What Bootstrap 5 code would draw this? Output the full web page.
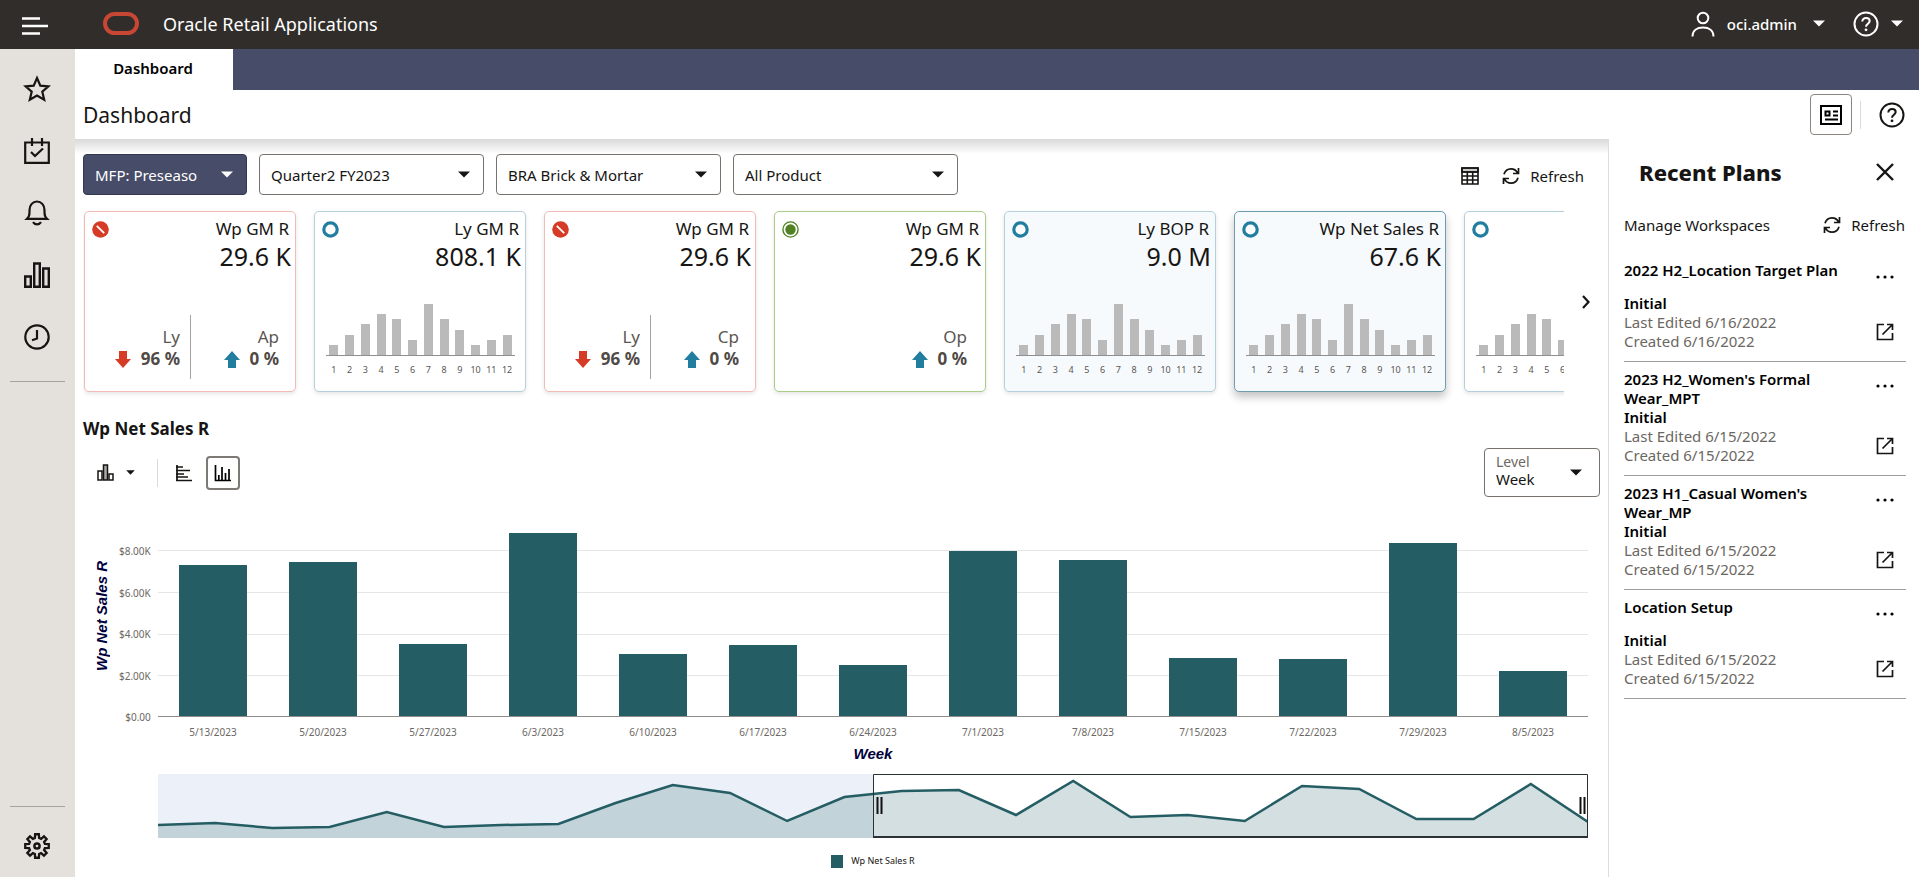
<!DOCTYPE html>
<html lang="en">
<head>
<meta charset="utf-8">
<meta name="viewport" content="width=device-width, initial-scale=1">
<title>Oracle Retail Applications - Dashboard</title>
<link href="https://cdn.jsdelivr.net/npm/bootstrap@5.3.0/dist/css/bootstrap.min.css" rel="stylesheet">
<style>
  :root { --ink:#161513; --navy:#474c68; --teal:#245d63; }
  body { font-family:"Noto Sans","Open Sans",sans-serif; font-size:15px; line-height:20px; color:var(--ink); background:#fff; }
  svg { display:block; flex:none; }
  .ico { fill:none; stroke:currentColor; }
  .plain { border:0; background:none; padding:0; color:inherit; }
  .topbar { height:49px; background:#312d2a; color:#fff; padding-bottom:2px; }
  .topbar h1 { font-size:18px; line-height:24px; }
  .menu-btn { width:75px; padding-left:22px; }
  .user-btn { margin-right:28px; }
  .rail { width:75px; flex:none; background:#e4e1dd; padding-top:9px; }
  .rail .plain { width:74px; height:62px; display:flex; align-items:center; justify-content:center; }
  .rail hr { width:55px; margin:13px 10px 0; border-color:#8d8984; opacity:.7; }
  .rail .rail-end hr { margin:0 10px 8px; }
  .tabstrip { height:41px; background:var(--navy); }
  .tabstrip a { width:158px; background:#fff; color:#000; font-weight:600; text-decoration:none; padding:0 2px 4px 0; }
  .titlerow { height:49px; padding:0 14px 0 8px; }
  .titlerow h2 { font-size:21px; line-height:28px; }
  .panel-btn { width:42px; height:41px; border:1px solid #8b8580; border-radius:4px; background:#fff; }
  .vline { width:1px; height:28px; background:#dcdad8; }
  .help-btn { margin-left:18px; }
  .workarea { background:linear-gradient(#d9d9d9, #fff 15px) no-repeat 0 0/100% 15px; padding:15px 8px 8px; min-width:0; }
  .pick { width:225px; height:41px; padding:7px 48px 5px 11px; font-size:15px; color:var(--ink); border:1px solid #77726d; border-radius:4px;
    background-image:url("data:image/svg+xml,%3Csvg xmlns='http://www.w3.org/2000/svg' viewBox='0 0 12 7'%3E%3Cpath d='M0 .5h12L6 6.5z' fill='%23161513'/%3E%3C/svg%3E");
    background-size:12px 7px; background-position:right 13px center; }
  .pick-dark { width:164px; padding-right:48px; color:#fff; background-color:var(--navy); border-color:#33374f;
    background-image:url("data:image/svg+xml,%3Csvg xmlns='http://www.w3.org/2000/svg' viewBox='0 0 12 7'%3E%3Cpath d='M0 .5h12L6 6.5z' fill='%23fff'/%3E%3C/svg%3E"); }
  .actions { gap:23px; padding-top:2px; }
  .refresh { gap:10px; }
  .strip { overflow:hidden; gap:18px; padding:16px 0 16px 1px; }
  .next-btn { width:36px; flex:none; padding-left:18px; }
  .kpi { flex:none; width:212px; height:181px; border:1px solid; border-radius:5px; padding:5px 6px 0 7px; background:#fff; box-shadow:0 2px 4px rgba(0,0,0,.1); }
  .kpi-red { border-color:#f3bbb5; }
  .kpi-blue { border-color:#b6cfdc; }
  .kpi-green { border-color:#abcb88; }
  .kpi-tint { background:#f6fafd; }
  .kpi-on { border-color:#6f9db0; box-shadow:0 5px 9px rgba(0,0,0,.24); }
  .kpi-name { font-size:17px; line-height:24px; height:24px; }
  .kpi-value { font-size:25px; line-height:30px; height:30px; margin-right:-2px; }
  .kpi-cmp { height:64px; margin-top:44px; color:#4f4a46; }
  .kpi-cmp > div { padding-top:11px; }
  .kpi-cmp span { display:block; font-size:17px; line-height:22px; color:#5b5652; }
  .kpi-cmp b { font-size:17px; line-height:22px; font-weight:700; }
  .delta { gap:10px; }
  .cmp-a { width:88px; }
  .cmp-b { width:88px; }
  .cmp-line { width:1px; height:64px; background:#a5a19d; margin-left:10px; }
  .mini { margin:31px 4px 0; height:54px; border-bottom:1px solid #8f8f8f; }
  .mini i { width:9px; background:#bababa; }
  .mini div, .mini-x span { flex:1; display:flex; justify-content:center; align-items:flex-end; }
  .mini-x { margin:7px 4px 0; font-size:9px; line-height:14px; color:#5a5652; }
  .section-title { font-size:17px; line-height:24px; font-weight:700; margin-top:9px; }
  .tools { padding-left:14px; margin-top:7px; }
  .type-btn { gap:12px; margin-right:22px; }
  .hbar-btn { margin:0 13px 0 17px; }
  .tool-on { width:34px; height:34px; border:2px solid #7d7975; border-radius:4px; background:#fff; padding:0; }
  .level { width:116px; height:49px; border:1px solid #77726d; border-radius:4px; padding:5px 11px;
    background:url("data:image/svg+xml,%3Csvg xmlns='http://www.w3.org/2000/svg' viewBox='0 0 12 7'%3E%3Cpath d='M0 .5h12L6 6.5z' fill='%23161513'/%3E%3C/svg%3E") no-repeat right 17px center/12px 7px; }
  .level label { font-size:14px; line-height:16px; color:#6b6763; }
  .level select { appearance:none; border:0; background:none; padding:0; font-size:15px; line-height:18px; height:18px; color:var(--ink); }
  .axis-title { font:italic 700 15px/18px "Liberation Sans",Arial,sans-serif; color:#00003c; }
  .y-title { writing-mode:vertical-rl; transform:rotate(180deg); width:18px; margin:0 8px 0 10px; }
  .week { margin-top:5px; }
  .chart { display:grid; grid-template-columns:75px minmax(0,1fr); padding-right:12px; margin-top:19px; }
  .tick { font-size:10px; line-height:14px; color:#6b6763; }
  .y-ticks { height:180px; margin-bottom:-7px; padding-right:9px; }
  .plot { display:grid; height:201px; }
  .plot > div { grid-area:1/1; }
  .lines { align-self:end; height:167px; }
  .lines div { flex:1; border-top:1px solid #e6e6e6; }
  .bars { border-bottom:1px solid #8f8c89; }
  .bars > div { flex:1; display:flex; align-items:flex-end; justify-content:center; }
  .bars i { width:61%; background:var(--teal); }
  .x-ticks { margin-top:7px; }
  .x-ticks span { flex:1; text-align:center; line-height:16px; }
  .overview { width:100%; height:64px; margin-top:11px; }
  .overview * { vector-effect:non-scaling-stroke; }
  .legend-row { font-size:9px; line-height:14px; margin-top:16px; }
  .swatch { width:12px; height:13px; background:var(--teal); margin-right:8px; }
  .plans { width:311px; flex:none; border-left:1px solid #dedcda; padding:0 13px 0 15px; }
  .plans h3 { font-size:22px; line-height:28px; font-weight:800; margin:19px 0 0 15px; }
  .close-btn { margin:19px 12px 0 0; }
  .plans-bar { margin:29px 1px 18px 0; }
  .plan { border-bottom:1px solid #a19d9a; padding:8px 12px 10px 0; }
  .plan h4 { font-size:15px; line-height:19px; font-weight:600; min-height:33px; margin:0; color:#000; width:215px; }
  .plan p { font-size:15px; line-height:19px; margin:0; color:#6b6763; }
  .plan p.stage { font-weight:600; color:#000; }
  .plan-actions { padding:14px 0 10px; }
</style>
</head>
<body>
<svg width="0" height="0" class="position-absolute" aria-hidden="true">
  <symbol id="i-caret" viewBox="0 0 12 7"><path d="M0 .5h12L6 6.500z" fill="currentColor"/></symbol>
  <symbol id="i-help" viewBox="0 0 26 26"><circle cx="13" cy="13" r="11.500" fill="none" stroke="currentColor" stroke-width="2"/><path d="M9.300 10.400c0-2.100 1.600-3.400 3.700-3.400s3.700 1.200 3.700 3.100c0 2.600-3.700 2.800-3.700 5.700" fill="none" stroke="currentColor" stroke-width="2"/><circle cx="13" cy="18.800" r="1.400" fill="currentColor"/></symbol>
  <symbol id="i-refresh" viewBox="0 0 18 18"><path d="M2 7.200C3 3.800 5.700 1.800 9 1.800c2.800 0 5.200 1.400 6.500 4M16.500 1v5.500H11M16 10.800c-1 3.400-3.700 5.400-7 5.400-2.800 0-5.200-1.400-6.500-4M1.500 17v-5.500H7" fill="none" stroke="currentColor" stroke-width="1.700"/></symbol>
  <symbol id="i-dots" viewBox="0 0 18 4"><circle cx="2" cy="2" r="1.600"/><circle cx="9" cy="2" r="1.600"/><circle cx="16" cy="2" r="1.600"/></symbol>
  <symbol id="i-open" viewBox="0 0 18 18"><path d="M8 1.500H1.500v15h15V10M11 1.500h5.500V7M16 2 6.500 11.500" fill="none" stroke="currentColor" stroke-width="1.700"/></symbol>
  <symbol id="i-red" viewBox="0 0 17 17"><circle cx="8.500" cy="8.500" r="8.300" fill="#d63b25"/><path d="m4.800 4.800 7.400 7.400" stroke="#fff" stroke-width="1.800"/></symbol>
  <symbol id="i-blue" viewBox="0 0 17 17"><circle cx="8.500" cy="8.500" r="6.700" fill="#fff" stroke="#227e9e" stroke-width="3.200"/></symbol>
  <symbol id="i-green" viewBox="0 0 17 17"><circle cx="8.500" cy="8.500" r="7.600" fill="#fff" stroke="#508223" stroke-width="1.400"/><circle cx="8.500" cy="8.500" r="5.200" fill="#508223"/></symbol>
  <symbol id="i-down" viewBox="0 0 16 17"><path d="M4 0h8v8h4l-8 9-8-9h4z" fill="#d63b25"/></symbol>
  <symbol id="i-up" viewBox="0 0 16 17"><path d="M4 17h8V9h4L8 0 0 9h4z" fill="#227e9e"/></symbol>
</svg>

<div class="d-flex flex-column min-vh-100">
  <header class="topbar d-flex align-items-center">
    <button class="plain menu-btn pt-1" aria-label="Navigation menu"><svg class="ico" width="26" height="20" stroke-width="2.500"><path d="M0 2.500h18M0 10h26M0 17.500h18"/></svg></button>
    <svg class="ms-4 ps-1" width="40" height="24" viewBox="0 0 36 24"><rect x="2" y="2" width="32" height="19" rx="9.500" fill="none" stroke="#c74634" stroke-width="4"/></svg>
    <h1 class="fw-normal m-0 ms-4">Oracle Retail Applications</h1>
    <div class="ms-auto d-flex align-items-center pe-3">
      <button class="plain user-btn d-flex align-items-center"><svg class="ico" width="24" height="26" stroke-width="2"><circle cx="12" cy="7" r="5.300"/><path d="M1.500 25.500c0-6 4.500-9 10.500-9s10.500 3 10.500 9"/></svg><span class="ms-2 ps-1 me-3 fw-medium">oci.admin</span><svg width="12" height="7"><use href="#i-caret"/></svg></button>
      <button class="plain d-flex align-items-center" aria-label="Help menu"><svg width="26" height="26" class="me-2"><use href="#i-help"/></svg><svg width="12" height="7" class="ms-1"><use href="#i-caret"/></svg></button>
    </div>
  </header>

  <div class="d-flex flex-grow-1">
    <nav class="rail d-flex flex-column" aria-label="Main">
      <button class="plain" aria-label="Favorites"><svg class="ico" width="28" height="28" viewBox="0 0 28 28" stroke-width="2.200"><path d="m14 3 3.300 7.600 8.200.7-6.200 5.400 1.900 8.100-7.200-4.300-7.200 4.300 1.900-8.100-6.200-5.400 8.200-.7z"/></svg></button>
      <button class="plain" aria-label="Tasks"><svg class="ico" width="26" height="26" viewBox="0 0 26 26" stroke-width="2.200"><path d="M1.200 4.500h23.600v20.300H1.200zM8 0v8M18 0v8"/><path d="m7 14 4 4 8-7.500"/></svg></button>
      <button class="plain" aria-label="Notifications"><svg class="ico" width="26" height="26" viewBox="0 0 26 26" stroke-width="2.200"><path d="M3 18.800h20c-2-1.800-2.500-3.200-2.500-6.300V10c0-5-3.300-8.500-7.500-8.500S5.500 5 5.500 10v2.500c0 3.100-.5 4.500-2.500 6.300zM9 22.200c2 3 6 3 8 0"/></svg></button>
      <button class="plain" aria-label="Reports"><svg class="ico" width="26" height="26" viewBox="0 0 26 26" stroke-width="2.400"><path d="M1.200 14.500h5.600v10.300H1.200zM10.200 1.500h5.600v23.300h-5.600zM19.200 6.500h5.600v18.300h-5.600z"/></svg></button>
      <button class="plain" aria-label="Recent"><svg class="ico" width="26" height="26" viewBox="0 0 26 26" stroke-width="2.200"><circle cx="13" cy="13" r="11.700"/><path d="M13 6v8.500L8 16.300"/></svg></button>
      <hr>
      <div class="mt-auto rail-end"><hr>
      <button class="plain" aria-label="Settings"><svg class="ico" id="gear" width="26" height="26" viewBox="-13 -13 26 26" stroke-width="2.300"><path d=""/><circle r="2.600" stroke-width="2.500"/></svg></button></div>
    </nav>

    <div class="flex-grow-1 d-flex flex-column" style="min-width:0">
      <nav class="tabstrip d-flex"><a href="#" class="d-flex align-items-center justify-content-center">Dashboard</a></nav>
      <div class="titlerow d-flex align-items-center">
        <h2 class="fw-normal m-0">Dashboard</h2>
        <button class="panel-btn ms-auto d-flex align-items-center justify-content-center p-0" aria-label="Recent plans panel"><svg class="ico" width="22" height="20" viewBox="0 0 22 20" stroke-width="2"><path d="M1 1h20v18H1zM5.500 6.500h4v4h-4zM13 6.500h5M13 10.500h5M5 14.500h13"/></svg></button>
        <span class="vline ms-2"></span>
        <button class="plain help-btn" aria-label="Help"><svg width="26" height="26"><use href="#i-help"/></svg></button>
      </div>

      <div class="d-flex flex-grow-1">
        <main class="workarea flex-grow-1">
          <div class="d-flex align-items-center">
            <div class="d-flex" style="gap:12px">
              <select class="form-select pick pick-dark" aria-label="Plan"><option>MFP: Preseason</option></select>
              <select class="form-select pick" aria-label="Period"><option>Quarter2 FY2023</option></select>
              <select class="form-select pick" aria-label="Location"><option>BRA Brick &amp; Mortar</option></select>
              <select class="form-select pick" aria-label="Product"><option>All Product</option></select>
            </div>
            <div class="actions d-flex align-items-center ms-auto me-3">
              <button class="plain" aria-label="Table view"><svg class="ico" width="18" height="18" viewBox="0 0 18 18" stroke-width="1.600"><path fill="#ccc" d="M1 1h16v4H1z"/><path d="M1 1h16v16H1zM1 5h16M1 9h16M1 13h16M6.300 5v12M11.700 5v12"/></svg></button>
              <button class="plain refresh d-flex align-items-center"><svg width="18" height="18"><use href="#i-refresh"/></svg>Refresh</button>
            </div>
          </div>

          <div class="d-flex align-items-center">
            <div class="strip d-flex flex-grow-1" id="strip"></div>
            <button class="plain next-btn" aria-label="Next tiles"><svg class="ico" width="8" height="14" stroke-width="2.200"><path d="m1 1 5.500 6L1 13"/></svg></button>
          </div>

          <h3 class="section-title mb-0">Wp Net Sales R</h3>
          <div class="tools d-flex align-items-center">
            <button class="plain type-btn d-flex align-items-center" aria-label="Chart type"><svg class="ico" width="17" height="17" viewBox="0 0 17 17" stroke-width="1.500"><path d="M1 7h4v9H1zM12 10h4v6h-4z"/><path fill="#aaa" d="M6.500 1h4v15h-4z"/></svg><svg width="9" height="5"><use href="#i-caret"/></svg></button>
            <span class="vline"></span>
            <button class="plain hbar-btn" aria-label="Horizontal bars"><svg class="ico" width="18" height="18" viewBox="0 0 18 18" stroke-width="1.700"><path d="M2 1v16M1 3h7M1 6.500h14M1 10h8M1 13h12M1 16.500h16"/></svg></button>
            <button class="tool-on d-flex align-items-center justify-content-center" aria-label="Vertical bars"><svg class="ico" width="18" height="18" viewBox="0 0 18 18" stroke-width="1.700"><path d="M1.500 1v15.500H17M4.800 16v-5M8 16V3M11.500 16V9M15 16V5"/></svg></button>
            <div class="level ms-auto d-flex flex-column"><label for="level">Level</label><select id="level"><option>Week</option></select></div>
          </div>

          <div class="chart">
            <div class="d-flex align-items-end">
              <div class="y-title axis-title align-self-center text-nowrap">Wp Net Sales R</div>
              <div class="y-ticks tick flex-grow-1 d-flex flex-column justify-content-between text-end"><span>$8.00K</span><span>$6.00K</span><span>$4.00K</span><span>$2.00K</span><span>$0.00</span></div>
            </div>
            <div class="plot">
              <div class="lines d-flex flex-column"><div></div><div></div><div></div><div></div></div>
              <div class="bars d-flex" id="bars"></div>
            </div>
            <div></div>
            <div>
              <div class="x-ticks tick d-flex" id="dates"></div>
              <div class="axis-title week text-center">Week</div>
              <svg class="overview" viewBox="0 0 1430 64" preserveAspectRatio="none" role="img" aria-label="Chart overview">
                <rect width="715" height="64" fill="#ecf0f8"/>
                <path id="ov-area" fill="#245d63" fill-opacity=".2"/>
                <path id="ov-line" fill="none" stroke="#245d63" stroke-width="2.500"/>
                <path d="M715.500 63V.5h714V63" fill="none" stroke="#2b3032"/>
                <path d="M715 63h715" stroke="#2b3032" stroke-width="2"/>
                <path d="M719.500 23v17M723.500 23v17M1422.500 23v17M1426.500 23v17" stroke="#111" stroke-width="2"/>
              </svg>
              <div class="legend-row d-flex justify-content-center align-items-center"><span class="swatch"></span>Wp Net Sales R</div>
            </div>
          </div>
        </main>

        <aside class="plans">
          <div class="d-flex align-items-center">
            <h3>Recent Plans</h3>
            <button class="plain close-btn ms-auto" aria-label="Close"><svg class="ico" width="18" height="18" stroke-width="2.400"><path d="m1 1 16 16M17 1 1 17"/></svg></button>
          </div>
          <div class="plans-bar d-flex justify-content-between">
            <button class="plain">Manage Workspaces</button>
            <button class="plain refresh d-flex align-items-center"><svg width="18" height="18"><use href="#i-refresh"/></svg>Refresh</button>
          </div>
          <div id="plans"></div>
        </aside>
      </div>
    </div>
  </div>
</div>

<script src="https://cdn.jsdelivr.net/npm/bootstrap@5.3.0/dist/js/bootstrap.bundle.min.js"></script>
<script>
  const use = (id, w, h) => `<svg width="${w}" height="${h}"><use href="#i-${id}"/></svg>`;

  // Monthly profile shared by the tile sparklines (pixels tall)
  const profile = [10, 20, 31, 41, 36, 15, 51, 36, 25, 10, 15, 20];
  const mini = `<div class="mini d-flex">${profile.map(h => `<div><i style="height:${h}px"></i></div>`).join('')}</div>
    <div class="mini-x d-flex">${profile.map((_, i) => `<span>${i + 1}</span>`).join('')}</div>`;
  const delta = (name, dir, pct, cls) => `<div class="${cls} text-end"><span>${name}</span><div class="delta d-flex justify-content-end align-items-center">${use(dir, 16, 17)}<b>${pct} %</b></div></div>`;
  const compare = other => `<div class="kpi-cmp d-flex">${delta('Ly', 'down', 96, 'cmp-a')}<i class="cmp-line"></i>${delta(other, 'up', 0, 'cmp-b')}</div>`;
  const single = `<div class="kpi-cmp d-flex justify-content-end pe-2 me-1">${delta('Op', 'up', 0, 'cmp-b')}</div>`;
  const tiles = [
    ['red', '', 'Wp GM R', '29.6 K', compare('Ap')],
    ['blue', '', 'Ly GM R', '808.1 K', mini],
    ['red', '', 'Wp GM R', '29.6 K', compare('Cp')],
    ['green', '', 'Wp GM R', '29.6 K', single],
    ['blue', 'kpi-tint', 'Ly BOP R', '9.0 M', mini],
    ['blue', 'kpi-tint kpi-on', 'Wp Net Sales R', '67.6 K', mini],
    ['blue', '', '', '', mini]
  ];
  document.getElementById('strip').innerHTML = tiles.map(([c, extra, name, value, body]) =>
    `<section class="kpi kpi-${c} ${extra}"><div class="d-flex justify-content-between align-items-start"><div class="pt-1 mt-n1">${use(c, 17, 17)}</div><div class="kpi-name">${name}</div></div><div class="kpi-value text-end">${value}</div>${body}</section>`).join('');

  // Weekly sales in dollars; the plot area tops out at 9640
  const top$ = 9640;
  const sales = [['5/13/2023', 7290], ['5/20/2023', 7430], ['5/27/2023', 3480], ['6/3/2023', 8820], ['6/10/2023', 3010], ['6/17/2023', 3440], ['6/24/2023', 2470], ['7/1/2023', 7970], ['7/8/2023', 7520], ['7/15/2023', 2820], ['7/22/2023', 2770], ['7/29/2023', 8320], ['8/5/2023', 2190]];
  document.getElementById('bars').innerHTML = sales.map(([, v]) => `<div><i style="height:${(v / top$ * 100).toFixed(2)}%"></i></div>`).join('');
  document.getElementById('dates').innerHTML = sales.map(([d]) => `<span>${d}</span>`).join('');

  const trend = [51, 49, 54, 53, 38, 53, 51, 50, 29, 11, 19, 47, 23, 17, 16, 41, 7, 43, 41, 47, 12, 15, 45, 45, 10, 48];
  const line = 'M' + trend.map((y, i) => `${(i * 57.2).toFixed(1)} ${y}`).join('L');
  document.getElementById('ov-line').setAttribute('d', line);
  document.getElementById('ov-area').setAttribute('d', line + 'V64H0z');

  // Eight-toothed gear outline
  let g = '';
  for (let k = 0; k < 8; k++) {
    [[-15, 8.2], [-9, 11.9], [9, 11.9], [15, 8.2]].forEach(([a, r]) => {
      const t = (k * 45 + a) * Math.PI / 180;
      g += `${g ? 'L' : 'M'}${(r * Math.sin(t)).toFixed(2)} ${(-r * Math.cos(t)).toFixed(2)}`;
    });
  }
  document.querySelector('#gear path').setAttribute('d', g + 'z');

  const plans = [['2022 H2_Location Target Plan', '6/16/2022'], ["2023 H2_Women's Formal Wear_MPT", '6/15/2022'], ["2023 H1_Casual Women's Wear_MP", '6/15/2022'], ['Location Setup', '6/15/2022']];
  document.getElementById('plans').innerHTML = plans.map(([n, d]) =>
    `<section class="plan d-flex justify-content-between"><div><h4>${n}</h4><p class="stage">Initial</p><p>Last Edited ${d}</p><p>Created ${d}</p></div>
     <div class="plan-actions d-flex flex-column justify-content-between"><button class="plain" aria-label="More actions">${use('dots', 18, 4)}</button><button class="plain" aria-label="Open plan">${use('open', 18, 18)}</button></div></section>`).join('');
</script>
</body>
</html>
